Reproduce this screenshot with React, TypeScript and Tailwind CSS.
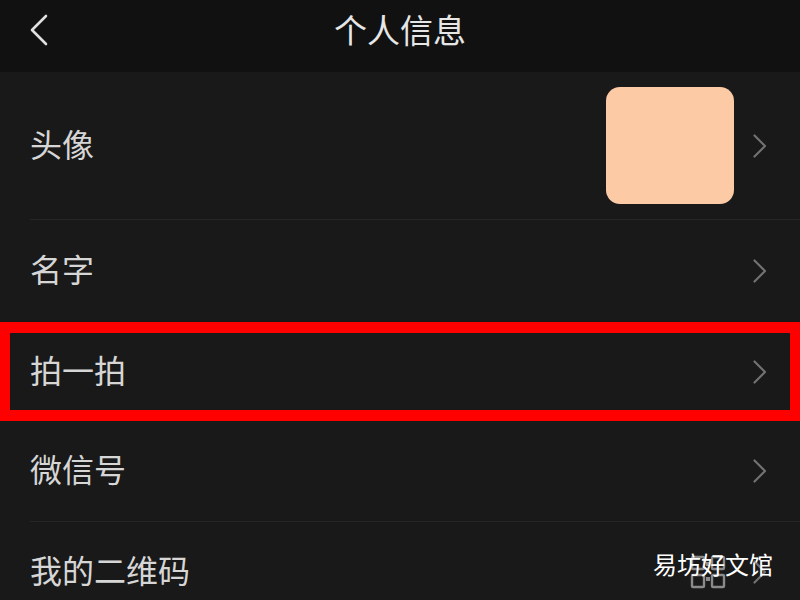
import React from 'react';

const font = { fontFamily: '"Noto Sans CJK SC", "Noto Sans", sans-serif' };

function Chevron() {
  return (
    <svg width="16" height="26" viewBox="0 0 16 26" fill="none" className="shrink-0">
      <path d="M2.5 2.5l10.5 10.5L2.5 23.5" stroke="#727272" strokeWidth="2.2" strokeLinecap="round" strokeLinejoin="round" />
    </svg>
  );
}

function QrIcon() {
  return (
    <svg width="36" height="34" viewBox="0 0 36 34" fill="none" className="shrink-0">
      <g stroke="#8a8a8a" strokeWidth="2.4">
        <rect x="2" y="2" width="12" height="12" rx="1" />
        <rect x="22" y="2" width="12" height="12" rx="1" />
        <rect x="2" y="20" width="12" height="12" rx="1" />
        <rect x="22" y="20" width="12" height="12" rx="1" />
      </g>
      <g fill="#8a8a8a">
        <rect x="16" y="7" width="4" height="4" />
        <rect x="16" y="22" width="4" height="4" />
      </g>
    </svg>
  );
}

function Label({ children }: { children: React.ReactNode }) {
  return <span className="flex-1 pb-[6px] text-[32px] leading-none text-[#d6d6d6]">{children}</span>;
}

function Divider() {
  return (
    <div className="pl-[30px]">
      <div className="h-px bg-[#262626]" />
    </div>
  );
}

export default function App() {
  return (
    <div className="w-[800px] h-[600px] overflow-hidden bg-[#191919] relative" style={font}>
      {/* Header */}
      <div className="h-[72px] bg-[#111111] flex items-center pb-[12px] relative">
        <div className="pl-[26px] flex items-center">
          <svg width="24" height="32" viewBox="0 0 24 32" fill="none">
            <path d="M20 2L6 16l14 14" stroke="#e0e0e0" strokeWidth="2.6" strokeLinecap="round" strokeLinejoin="round" />
          </svg>
        </div>
        <div className="absolute inset-0 pb-[14px] flex items-center justify-center pointer-events-none">
          <span className="text-[33px] leading-none text-[#e6e6e6]">个人信息</span>
        </div>
      </div>

      {/* Avatar row */}
      <div className="h-[147px] flex items-center pl-[30px] pr-[32px]">
        <Label>头像</Label>
        <div className="flex items-center gap-[18px]">
          <div className="w-[128px] h-[117px] rounded-[14px] bg-[#fdcaa6]" />
          <Chevron />
        </div>
      </div>
      <Divider />

      <div className="h-[102px] flex items-center pl-[30px] pr-[32px]">
        <Label>名字</Label>
        <Chevron />
      </div>

      {/* Highlighted row */}
      <div className="h-[99px] border-x-[10px] border-y-[11px] border-[#ff0000] flex items-center pl-[20px] pr-[22px]">
        <Label>拍一拍</Label>
        <Chevron />
      </div>

      <div className="h-[100px] flex items-center pl-[30px] pr-[32px]">
        <Label>微信号</Label>
        <Chevron />
      </div>
      <Divider />

      <div className="h-[100px] flex items-center pl-[30px] pr-[32px]">
        <Label>我的二维码</Label>
        <div className="flex items-center gap-[26px]">
          <QrIcon />
          <Chevron />
        </div>
      </div>

      {/* Watermark */}
      <div className="absolute left-[653px] top-[552px] text-[24px] leading-none text-white whitespace-nowrap">
        易坊好文馆
      </div>
    </div>
  );
}
